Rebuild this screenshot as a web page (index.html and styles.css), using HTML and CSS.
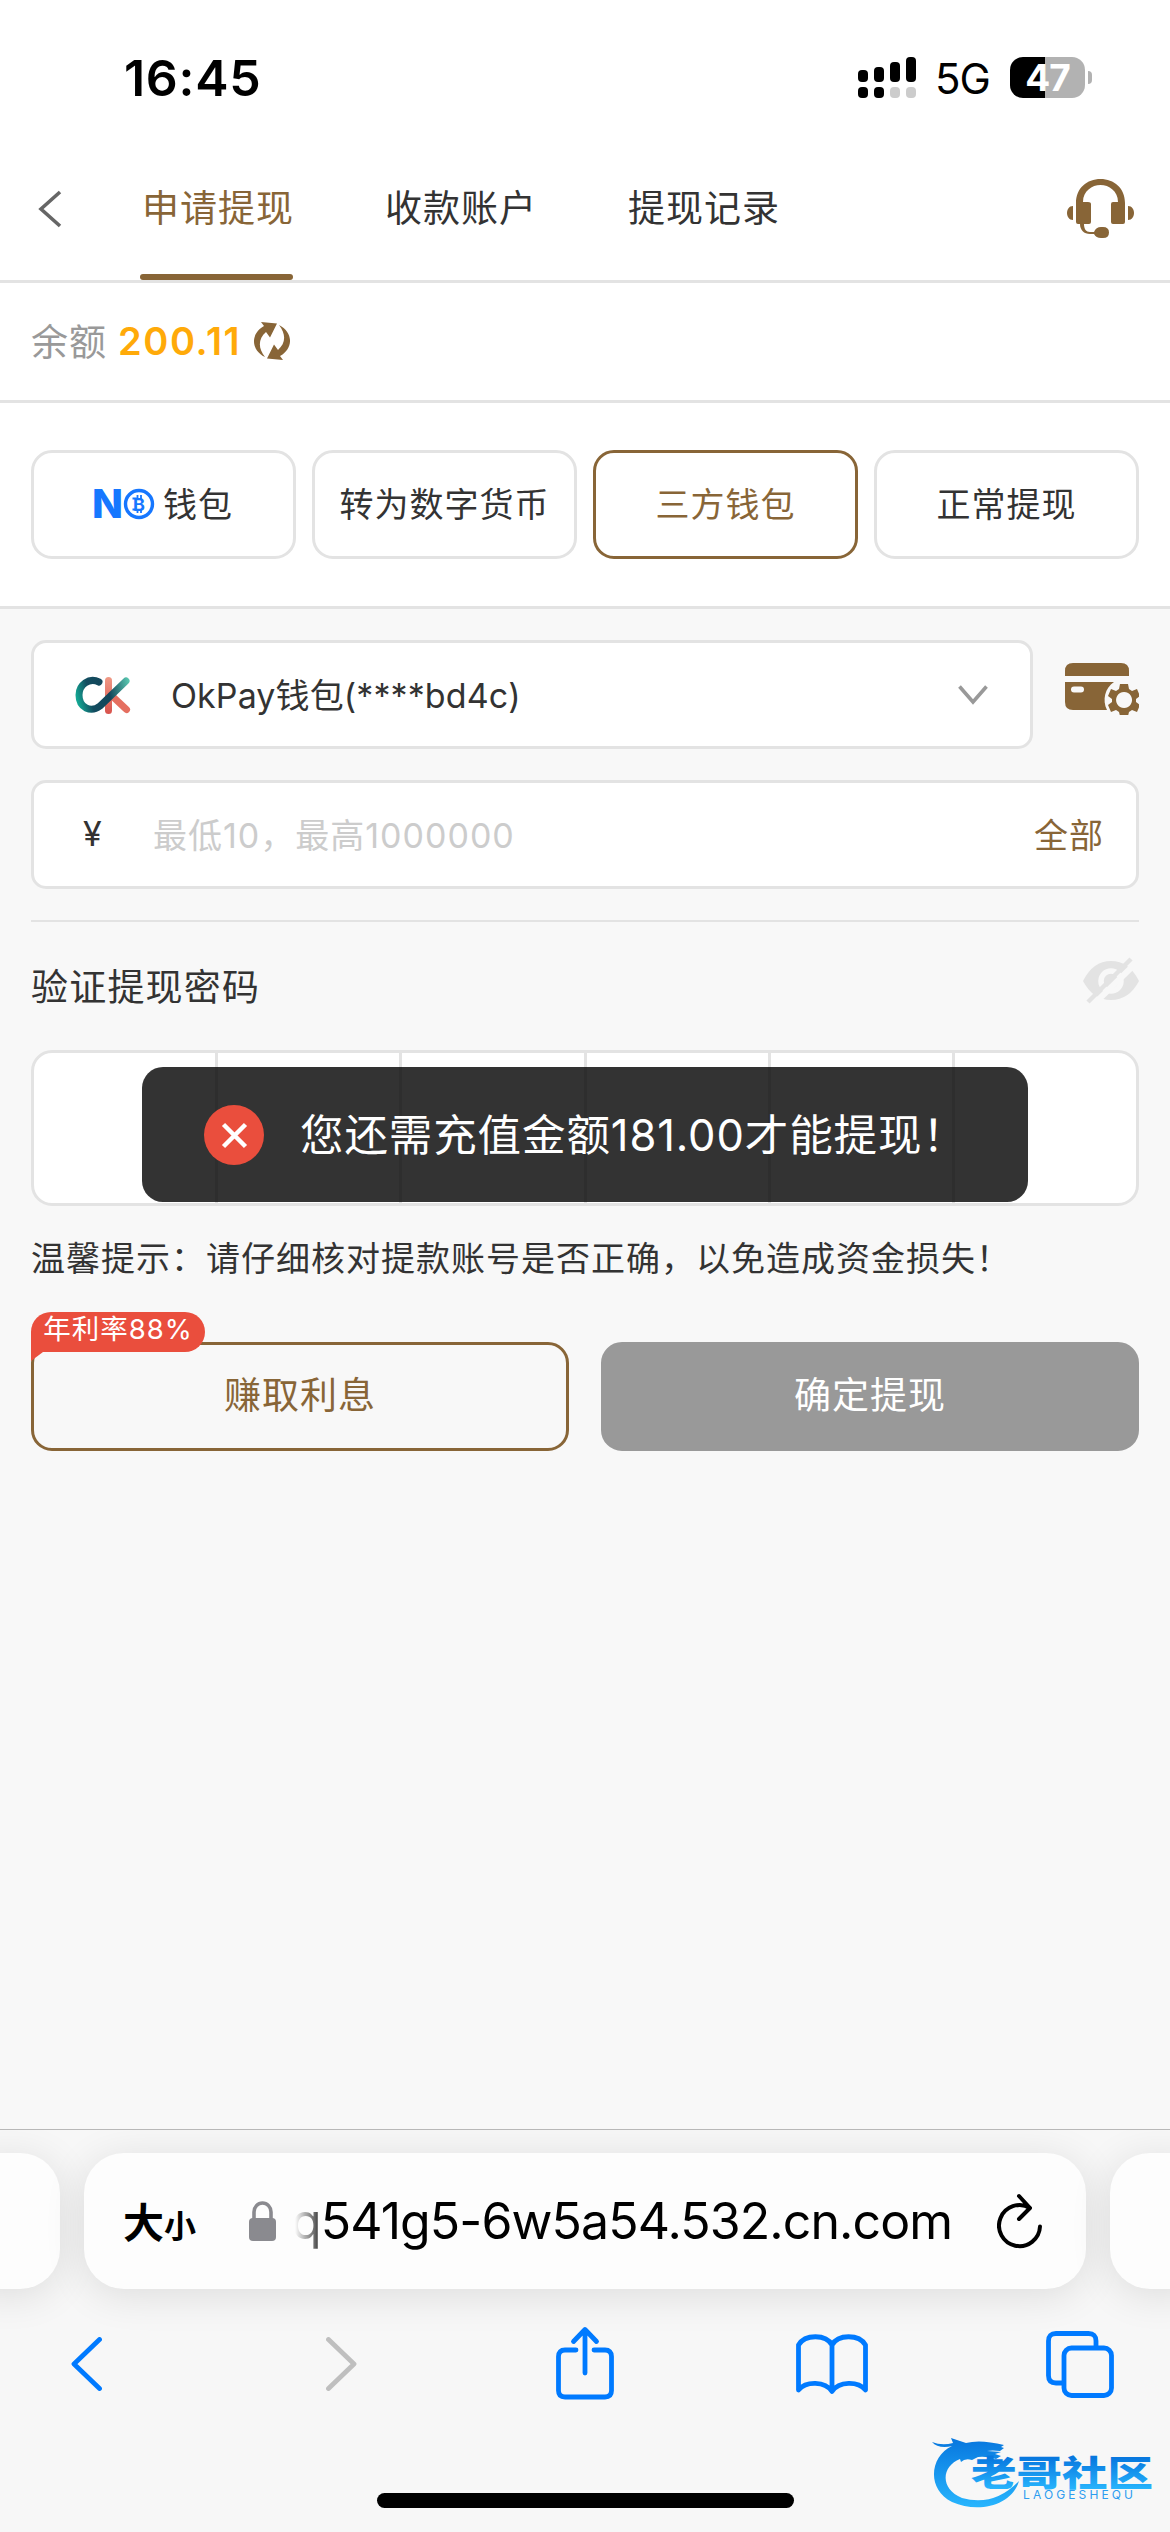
FILE: index.html
```html
<!DOCTYPE html>
<html lang="zh-CN">
<head>
<meta charset="utf-8">
<title>申请提现</title>
<link rel="stylesheet" href="styles.css">
</head>
<body>
<div class="status">
    <div class="time">16:45</div>
    <div class="status-right">
        <svg class="signal" width="58" height="41" viewBox="0 0 58 41">
            <rect x="0" y="13" width="10" height="12" rx="4"/>
            <rect x="16" y="10" width="10" height="15" rx="4"/>
            <rect x="32" y="5" width="10" height="20" rx="4"/>
            <rect x="48" y="0" width="10" height="25" rx="4"/>
            <rect x="0" y="30" width="10" height="11" rx="4"/>
            <rect x="16" y="30" width="10" height="11" rx="4"/>
            <rect x="32" y="30" width="10" height="11" rx="4" fill="#ccc"/>
            <rect x="48" y="30" width="10" height="11" rx="4" fill="#ccc"/>
        </svg>
        <span class="network">5G</span>
        <div class="battery">47</div>
    </div>
</div>

<div class="nav">
    <svg class="back" width="24" height="38" viewBox="0 0 24 38"><path d="M22 2L3 19l19 17" fill="none" stroke="#666" stroke-width="3.6"/></svg>
    <div class="tabs">
        <a class="tab active">申请提现</a>
        <a class="tab">收款账户</a>
        <a class="tab">提现记录</a>
    </div>
    <svg class="service" width="68" height="60" viewBox="0 0 68 60" fill="#886537">
        <path d="M9 30V24C9 9 20 0 33.500 0S58 9 58 24V43q0 2-2 2H46q-2 0-2-2V25q0-2 2-2h5C51 12 42 6 33.500 6S16 12 16 23h5q3 0 3 2V43q0 2-2 2H17c0 5 2 8 6 8h4q2-5 7-5h2q6 0 6 5.500T36 59h-2q-5 0-7-4h-4c-6 0-10-4-10-10h-2q-2 0-2-2z"/>
        <path d="M6 27v14C-2 41-2 27 6 27zM61 27v14c8 0 8-14 0-14z"/>
    </svg>
</div>

<div class="balance">
    <span class="balance-label">余额</span>
    <span class="balance-num">200.11</span>
    <svg width="36" height="38" viewBox="0 0 36 38" fill="#886537">
        <path d="M7 0L23 1.500 16 15.500 12 10C4 17 4 26 11 35-3 28-4 12 10 4z"/>
        <path d="M29 38L13 36.500 20 22.500 24 28C32 21 32 12 25 3 39 10 40 26 26 34z"/>
    </svg>
</div>

<div class="methods">
    <div class="method">
        <svg class="no-logo" width="61" height="30" viewBox="0 0 61 30">
            <text x="-2" y="29" class="no-n" textLength="31" lengthAdjust="spacingAndGlyphs">N</text>
            <circle cx="45" cy="15" r="13.500" fill="none" stroke="#1677ff" stroke-width="3.400"/>
            <text x="39" y="21.500" class="no-b">B</text>
            <path d="M43.500 6v4M47 6v4M43.500 20v4M47 20v4M38.500 9.500h4M38.500 20.500h4" stroke="#1677ff" stroke-width="1.800"/>
        </svg>
        <span>钱包</span>
    </div>
    <div class="method">转为数字货币</div>
    <div class="method active">三方钱包</div>
    <div class="method">正常提现</div>
</div>

<div class="form">
    <div class="account-row">
        <div class="field account">
            <svg class="ok-logo" width="56" height="44" viewBox="0 0 56 44">
                <defs>
                    <linearGradient id="teal" gradientUnits="userSpaceOnUse" x1="1" y1="24" x2="54" y2="10">
                        <stop offset="0" stop-color="#14a894"/>
                        <stop offset=".25" stop-color="#124d60"/>
                        <stop offset=".6" stop-color="#14465a"/>
                        <stop offset="1" stop-color="#57c4ae"/>
                    </linearGradient>
                    <linearGradient id="coral" x1="0" y1="0" x2="0" y2="1">
                        <stop offset="0" stop-color="#f09a86"/>
                        <stop offset="1" stop-color="#d8524c"/>
                    </linearGradient>
                </defs>
                <rect x="30" y="4" width="7" height="37" rx="3.500" fill="url(#coral)"/>
                <path d="M36 22L51.500 36.500" stroke="#e56f60" stroke-width="7" stroke-linecap="round"/>
                <path d="M24 9C14 4 4 12 4 22 4 35 16 40 25 33L51 8" fill="none" stroke="url(#teal)" stroke-width="7" stroke-linecap="round"/>
            </svg>
            <span class="account-name">OkPay钱包(****bd4c)</span>
            <svg class="arrow" width="30" height="20" viewBox="0 0 30 20"><path d="M1.500 1.500L15 17 28.500 1.500" fill="none" stroke="#999" stroke-width="3.600"/></svg>
        </div>
        <svg class="card-set" width="74" height="53" viewBox="0 0 74 53" fill="#886537">
            <path d="M0 14V9q0-8 8-8h48q8 0 8 8v5z"/>
            <path fill-rule="evenodd" d="M0 20h49c-9 6-12 18-7 28H8q-8 0-8-8zM9 24.500a3 3 0 0 0 0 6h7a3 3 0 0 0 0-6z"/>
            <path fill-rule="evenodd" d="M55 22h8l1 5 3 2 5-2 3 7-4 3v3l4 3-3 7-5-2-3 2-1 4h-8l-1-4-3-2-5 2-3-7 4-3v-3l-4-3 3-7 5 2 3-2zM59 30a8 8 0 1 0 .1 0z"/>
        </svg>
    </div>

    <div class="field amount">
        <span class="yen">¥</span>
        <span class="placeholder">最低10，最高1000000</span>
        <a class="all">全部</a>
    </div>

    <div class="line"></div>

    <div class="pwd-title">
        <span>验证提现密码</span>
        <svg class="eye" width="56" height="47" viewBox="0 0 56 47">
            <path d="M0 24Q10 4 28 4t28 20Q46 43 28 43T0 24z" fill="#e3e3e3"/>
            <circle cx="28" cy="24" r="10" fill="#e3e3e3" stroke="#f8f8f8" stroke-width="5.500"/>
            <path d="M9 49L53 6" stroke="#f8f8f8" stroke-width="6"/>
            <path d="M5 45L48 2" stroke="#e3e3e3" stroke-width="4.500"/>
        </svg>
    </div>

    <div class="pwd-box">
        <i></i><i></i><i></i><i></i><i></i><i></i>
        <div class="toast">
            <svg width="60" height="60" viewBox="0 0 60 60">
                <circle cx="30" cy="30" r="30" fill="#ea4e3d"/>
                <path d="M19.500 19.500l22 22M41.500 19.500l-22 22" stroke="#fff" stroke-width="4.500"/>
            </svg>
            <span>您还需充值金额181.00才能提现！</span>
        </div>
    </div>

    <div class="tip">温馨提示：请仔细核对提款账号是否正确，以免造成资金损失！</div>

    <div class="buttons">
        <div class="btn outline">
            <span class="rate">年利率88%</span>
            赚取利息
        </div>
        <div class="btn disabled">确定提现</div>
    </div>
</div>

<div class="browser">
    <div class="address-row">
        <div class="pill side"></div>
        <div class="pill main">
            <span class="aa">大<small>小</small></span>
            <svg class="lock" width="27" height="40" viewBox="0 0 27 40"><rect y="17" width="27" height="23" rx="4" fill="#8a8a8f"/><path d="M5 19V11a8.500 9 0 0 1 17 0v8" fill="none" stroke="#8a8a8f" stroke-width="3.600"/></svg>
            <span class="url">q541g5-6w5a54.532.cn.com</span>
            <svg class="reload" width="46" height="56" viewBox="0 0 46 56" fill="none" stroke="#000" stroke-width="4" stroke-linecap="round" stroke-linejoin="round"><path d="M43 33.500A20.500 20.500 0 1 1 33 15M22 3l11 12-11 11"/></svg>
        </div>
        <div class="pill side"></div>
    </div>
    <div class="tools">
        <svg width="31" height="54" viewBox="0 0 31 54"><path d="M28.500 2.500L3 27l25.500 24.500"/></svg>
        <svg class="forward" width="31" height="54" viewBox="0 0 31 54"><path d="M2.500 2.500L28 27 2.500 51.500"/></svg>
        <svg class="share" width="58" height="74" viewBox="0 0 58 74"><path d="M20 24H9q-6.500 0-6.500 6.500v34Q2.500 71 9 71h40q6.500 0 6.500-6.500v-34Q55.500 24 49 24H38M29 47V4M17.500 15.500L29 3.500l11.500 12"/></svg>
        <svg class="book" width="72" height="60" viewBox="0 0 72 60"><path d="M36 56V11C30 0 9 0 2.500 11v45C10 47 29 47 36 57.500 43 47 62 47 69.500 56V11C63 0 42 0 36 11"/></svg>
        <svg class="pages" width="68" height="67" viewBox="0 0 68 67"><path d="M50 16V10q0-7.500-7.500-7.500H10Q2.500 2.500 2.500 10v34.500Q2.500 52 10 52h6"/><rect x="18" y="17" width="47.500" height="47.500" rx="7.500"/></svg>
    </div>
    <div class="home-bar"></div>
</div>

<svg class="watermark" width="224" height="78" viewBox="0 0 224 78">
    <defs>
        <linearGradient id="wave" gradientUnits="userSpaceOnUse" x1="0" y1="8" x2="0" y2="74">
            <stop offset="0" stop-color="#0878df"/>
            <stop offset="1" stop-color="#27b4fd"/>
        </linearGradient>
        <linearGradient id="words" gradientUnits="userSpaceOnUse" x1="0" y1="26" x2="0" y2="57">
            <stop offset="0" stop-color="#0878df"/>
            <stop offset="1" stop-color="#27b4fd"/>
        </linearGradient>
    </defs>
    <g fill="url(#wave)">
        <path d="M0 10q10 4 21 1l-2-5 15 5q14-4 38 2l-3 2 3 1-4 3q-8-1-13 0l14 1-6 2 6 2-5 3q-10-3-18-2l-6 3q-7-2-11 2l-1-3C10 34 7 56 30 66q32 9 57-17C80 73 47 82 20 70-6 57-2 24 20 14 12 16 4 15 0 10z"/>
    </g>
    <text x="39" y="54" class="wm-cn" textLength="182" lengthAdjust="spacingAndGlyphs">老哥社区</text>
    <text x="91" y="67" class="wm-en" textLength="110">LAOGESHEQU</text>
</svg>
</body>
</html>
```
FILE: styles.css
```css
* {
    box-sizing: border-box;
}
body {
    position: relative;
    display: flex;
    flex-direction: column;
    width: 1170px;
    height: 2532px;
    margin: 0;
    overflow: hidden;
    background: #fff;
    color: #333;
    font-family: Inter, "Noto Sans CJK SC", sans-serif;
    font-size: 34px;
    letter-spacing: 1px;
}
svg {
    display: block;
    flex: none;
}

/* status bar */
.status {
    display: flex;
    justify-content: space-between;
    height: 137px;
    padding: 57px 80px 0 124px;
    color: #000;
    letter-spacing: 0;
}
.time {
    font-size: 50px;
    font-weight: 600;
    line-height: 42px;
    letter-spacing: 0.7px;
}
.status-right {
    display: flex;
    height: 41px;
}
.network {
    width: 75px;
    margin-left: 19px;
    font-size: 42px;
    line-height: 44px;
    letter-spacing: -1px;
}
.battery {
    position: relative;
    width: 75px;
    height: 41px;
    margin-right: 5px;
    border-radius: 13px;
    background: linear-gradient(90deg, #000 47%, #b2b2b2 47%);
    color: #fff;
    font-size: 37px;
    font-weight: 700;
    line-height: 41px;
    text-align: center;
    letter-spacing: -1px;
}
.battery::after {
    content: "";
    position: absolute;
    right: -7px;
    top: 14px;
    width: 4px;
    height: 13px;
    border-radius: 0 6px 6px 0;
    background: #b2b2b2;
}

/* page header */
.nav {
    display: flex;
    align-items: center;
    height: 146px;
    padding: 0 35px 0 38px;
    border-bottom: 3px solid #e3e3e3;
}
.tabs {
    display: flex;
    flex: 1;
    align-self: stretch;
    gap: 90px;
    margin-left: 78px;
}
.tab {
    width: 153px;
    padding-left: 2px;
    font-size: 37px;
    line-height: 143px;
    letter-spacing: 1px;
    white-space: nowrap;
    text-align: center;
}
.tab.active {
    position: relative;
    color: #886537;
}
.tab.active::after {
    content: "";
    position: absolute;
    left: 0;
    right: 0;
    bottom: 0;
    height: 6px;
    border-radius: 3px;
    background: #886537;
}
.balance {
    display: flex;
    align-items: center;
    height: 120px;
    padding: 0 31px 2px;
    border-bottom: 3px solid #e3e3e3;
    font-size: 37px;
}
.balance-label {
    padding-bottom: 2px;
    color: #999;
}
.balance-num {
    margin: 0 13px 0 11px;
    color: #ffaa09;
    font-size: 38px;
    font-weight: 600;
    letter-spacing: 1.6px;
}

/* withdraw methods */
.methods {
    display: grid;
    grid-template-columns: repeat(4, 1fr);
    gap: 16px;
    padding: 47px 31px;
    border-bottom: 3px solid #e3e3e3;
}
.method {
    display: flex;
    align-items: center;
    justify-content: center;
    height: 109px;
    padding-bottom: 4px;
    border: 3px solid #e3e3e3;
    border-radius: 21px;
}
.method.active {
    border-color: #886537;
    color: #886537;
}
.no-logo {
    margin: 2px 8px 0 0;
    overflow: visible;
}
.no-n {
    fill: #1677ff;
    font-size: 39px;
    font-weight: 800;
    letter-spacing: 0;
}
.no-b {
    fill: #1677ff;
    font-size: 18px;
    font-weight: 700;
    letter-spacing: 0;
}

/* form */
.form {
    flex: 1;
    padding: 31px;
    background: #f8f8f8;
}
.account-row {
    display: flex;
    justify-content: space-between;
}
.field {
    display: flex;
    align-items: center;
    height: 109px;
    border: 3px solid #e3e3e3;
    border-radius: 15px;
    background: #fff;
}
.account {
    width: 1002px;
    padding: 0 42px 0 41px;
}
.account-name {
    flex: 1;
    margin-left: 40px;
    padding-bottom: 3px;
    letter-spacing: 0.1px;
}
.card-set {
    margin-top: 22px;
}
.amount {
    margin-top: 31px;
    padding: 0 32px 3px 49px;
}
.yen {
    width: 70px;
}
.placeholder {
    flex: 1;
    color: #ccc;
}
.all {
    color: #886537;
}
.line {
    height: 2px;
    margin-top: 31px;
    background: #e3e3e3;
}
.pwd-title {
    display: flex;
    align-items: center;
    justify-content: space-between;
    height: 128px;
    font-size: 37px;
    letter-spacing: 1.2px;
}
.pwd-title span {
    padding-bottom: 2px;
}
.eye {
    margin-bottom: 12px;
}
.pwd-box {
    position: relative;
    display: flex;
    height: 156px;
    border: 3px solid #e3e3e3;
    border-radius: 21px;
    background: #fff;
}
.pwd-box i {
    flex: 1;
    border-left: 3px solid #e3e3e3;
}
.pwd-box i:first-child {
    border-left: 0;
}
.toast {
    position: absolute;
    left: 108px;
    top: 14px;
    display: flex;
    align-items: center;
    gap: 36px;
    width: 886px;
    height: 135px;
    padding-left: 62px;
    border-radius: 21px;
    background: rgba(0, 0, 0, 0.8);
    color: #fff;
    font-size: 43.5px;
    letter-spacing: 0.9px;
    white-space: nowrap;
}
.toast span {
    padding-bottom: 4px;
}
.tip {
    height: 105px;
    line-height: 105px;
    white-space: nowrap;
}
.buttons {
    display: flex;
    gap: 32px;
    margin-top: 31px;
}
.btn {
    position: relative;
    flex: 1;
    height: 109px;
    border: 3px solid #886537;
    border-radius: 21px;
    color: #886537;
    font-size: 37px;
    line-height: 101px;
    text-align: center;
}
.btn.disabled {
    border-color: #999;
    background: #999;
    color: #fff;
}
.rate {
    position: absolute;
    left: -3px;
    top: -33px;
    width: 174px;
    height: 40px;
    border-radius: 20px 20px 20px 0;
    background: #ea4e3d;
    color: #fff;
    font-size: 27.5px;
    line-height: 35px;
}
.rate::after {
    content: "";
    position: absolute;
    left: 0;
    top: 40px;
    border-top: 9px solid #ea4e3d;
    border-right: 12px solid transparent;
}

/* browser bar */
.browser {
    height: 403px;
    border-top: 1px solid #b8b8b8;
    background: #f7f7f7;
    overflow: hidden;
}
.address-row {
    display: flex;
    gap: 24px;
    width: 1250px;
    margin: 23px 0 0 -40px;
}
.pill {
    height: 136px;
    border-radius: 40px;
    background: #fdfdfd;
    box-shadow: 0 6px 42px rgba(0, 0, 0, 0.11);
}
.pill.side {
    width: 100px;
}
.pill.main {
    display: flex;
    align-items: center;
    width: 1002px;
    padding: 0 43px 0 39px;
    color: #000;
}
.aa {
    width: 126px;
    padding-bottom: 3px;
    font-size: 41px;
    font-weight: 600;
    letter-spacing: 0;
    white-space: nowrap;
}
.aa small {
    font-size: 32px;
    font-weight: 700;
}
.url {
    flex: 1;
    margin-left: 15px;
    font-size: 50px;
    letter-spacing: -0.9px;
    white-space: nowrap;
    -webkit-mask-image: linear-gradient(90deg, transparent 4px, rgba(0, 0, 0, 0.6) 24px, #000 32px);
    mask-image: linear-gradient(90deg, transparent 4px, rgba(0, 0, 0, 0.6) 24px, #000 32px);
}
.tools {
    display: flex;
    align-items: center;
    height: 74px;
    margin: 38px 0 0 71px;
    fill: none;
    stroke: #007aff;
    stroke-width: 4.8;
    stroke-linecap: round;
    stroke-linejoin: round;
}
.forward {
    margin-left: 224px;
    stroke: #bfbfbf;
}
.share {
    margin: 0 0 3px 199px;
}
.book {
    margin-left: 182px;
}
.pages {
    margin-left: 178px;
}
.home-bar {
    width: 417px;
    height: 15px;
    margin: 92px auto 0;
    border-radius: 8px;
    background: #000;
}

/* community mark in the corner */
.watermark {
    position: absolute;
    left: 932px;
    top: 2432px;
}
.wm-cn {
    fill: url(#words);
    font-size: 35px;
    font-weight: 900;
    letter-spacing: 0;
}
.wm-en {
    fill: #2d9cf0;
    font-size: 12px;
    letter-spacing: 0;
}
```
